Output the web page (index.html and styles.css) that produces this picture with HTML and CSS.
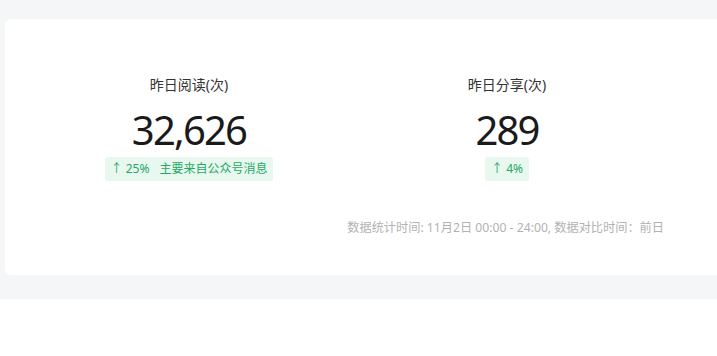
FILE: index.html
```html
<!DOCTYPE html>
<html lang="zh-CN">
<head>
  <meta charset="UTF-8" />
  <meta name="viewport" content="width=device-width, initial-scale=1.0"/>
  <title>数据概览</title>
  <link rel="stylesheet" href="styles.css">
</head>
<body>
  <div class="page">
    <div class="card">
      <div class="stats">
        <div class="stat">
          <div class="label">昨日阅读(次)</div>
          <div class="value">32,626</div>
          <div class="badge">↑ 25%<span class="note">主要来自公众号消息</span></div>
        </div>
        <div class="stat">
          <div class="label">昨日分享(次)</div>
          <div class="value">289</div>
          <div class="badge">↑ 4%</div>
        </div>
      </div>
      <div class="meta">数据统计时间: 11月2日 00:00 - 24:00, 数据对比时间：前日</div>
    </div>
  </div>
</body>
</html>
```
FILE: styles.css
```css
*{margin:0;padding:0;box-sizing:border-box;}
body{background:#fff;font-family:"Noto Sans","Noto Sans CJK SC",sans-serif;color:#333;}
.page{background:#f5f6f8;padding:19px 0 24px 5px;height:299px;}
.card{background:#fff;border-radius:6px 0 0 6px;height:256px;padding:56px 0 0 25px;width:720px;}
.stats{display:flex;width:636px;}
.stat{flex:1;display:flex;flex-direction:column;align-items:center;}
.label{font-size:14px;line-height:20px;color:#333;}
.value{font-size:40px;line-height:48px;color:#1a1a1a;margin-top:11px;letter-spacing:-1.8px;}
.badge{margin-top:3px;height:24px;line-height:24px;padding:0 6px;font-size:12px;color:#1fa868;background:#e9f8ef;border-radius:3px;}
.note{margin-left:10px;}
.meta{width:636px;text-align:right;font-size:12.2px;color:#b2b2b2;margin-top:37px;padding-right:2px;}
```
